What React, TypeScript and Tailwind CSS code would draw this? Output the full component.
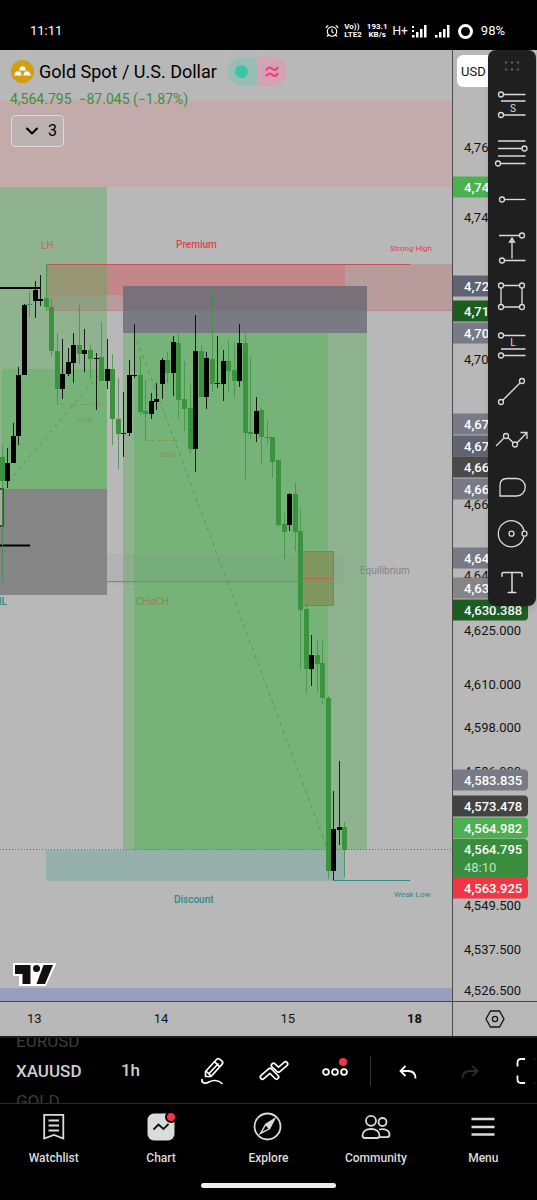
import { ReactNode } from "react"
import { AlarmClock, ChevronDown, Type } from "lucide-react"

type Candle = [high: number, top: number, bottom: number, low: number, up?: boolean]

const CANDLE_STEP = 5.53

// up = black body, down = green body
const candles: Candle[] = [
    [445, 457, 481, 582],
    [448, 463, 481, 488, true],
    [423, 436, 463, 463, true],
    [367, 375, 436, 445, true],
    [304, 305, 375, 375, true],
    [291, 304, 305, 317],
    [281, 290, 301, 318, true],
    [275, 299, 301, 306, true],
    [264, 298, 307, 310],
    [298, 307, 351, 356],
    [333, 351, 389, 404],
    [339, 374, 389, 399, true],
    [348, 362, 374, 376, true],
    [333, 345, 363, 383, true],
    [305, 345, 354, 364],
    [329, 350, 354, 372, true],
    [345, 350, 359, 379],
    [353, 358, 359, 410, true],
    [322, 357, 381, 381],
    [339, 369, 381, 389, true],
    [354, 369, 419, 445],
    [378, 419, 434, 469],
    [392, 433, 434, 457, true],
    [360, 375, 433, 436, true],
    [324, 375, 376, 378, true],
    [356, 375, 412, 415],
    [380, 411, 414, 440],
    [393, 401, 414, 419, true],
    [383, 399, 402, 410, true],
    [358, 360, 384, 399, true],
    [352, 360, 373, 383],
    [336, 342, 373, 396, true],
    [334, 343, 400, 419],
    [361, 399, 409, 431],
    [383, 408, 449, 453],
    [315, 351, 449, 472, true],
    [345, 351, 397, 397],
    [352, 358, 397, 409, true],
    [292, 359, 384, 392],
    [336, 383, 384, 388, true],
    [350, 361, 384, 401, true],
    [340, 361, 371, 391],
    [342, 370, 381, 398],
    [324, 343, 381, 387, true],
    [333, 343, 433, 479],
    [357, 432, 434, 439],
    [397, 411, 434, 442, true],
    [407, 410, 437, 465],
    [420, 437, 438, 444],
    [437, 437, 462, 478],
    [460, 460, 525, 527],
    [513, 524, 532, 559],
    [493, 494, 525, 531, true],
    [483, 494, 532, 551],
    [509, 531, 610, 669],
    [604, 609, 669, 693],
    [635, 655, 669, 686, true],
    [640, 655, 664, 692],
    [641, 663, 698, 704],
    [696, 698, 871, 879],
    [791, 829, 871, 880, true],
    [761, 827, 830, 845, true],
    [822, 827, 850, 877],
]

// y is measured from the top of the chart
const ticks = [
    { price: "4,760.000", y: 97 },
    { price: "4,740.000", y: 167 },
    { price: "4,700.000", y: 309 },
    { price: "4,660.000", y: 454 },
    { price: "4,640.000", y: 525 },
    { price: "4,625.000", y: 580 },
    { price: "4,610.000", y: 634 },
    { price: "4,598.000", y: 677 },
    { price: "4,586.000", y: 721 },
    { price: "4,549.500", y: 855 },
    { price: "4,537.500", y: 899 },
    { price: "4,526.500", y: 940 },
]

const badges = [
    { price: "4,748.500", y: 137, color: "bg-[#4caf50]" },
    { price: "4,720.800", y: 236, color: "bg-[#5f6372]" },
    { price: "4,710.250", y: 261, color: "bg-[#1b5e20]" },
    { price: "4,707.400", y: 283, color: "bg-[#787b86]" },
    { price: "4,679.100", y: 374, color: "bg-[#787b86]" },
    { price: "4,676.300", y: 396, color: "bg-[#5f6372]" },
    { price: "4,669.900", y: 417, color: "bg-[#4a4a4a]" },
    { price: "4,664.200", y: 439, color: "bg-[#787b86]" },
    { price: "4,645.100", y: 508, color: "bg-[#787b86]" },
    { price: "4,636.500", y: 538, color: "bg-[#858585]" },
    { price: "4,630.388", y: 560, color: "bg-[#1b5e20]" },
    { price: "4,583.835", y: 730, color: "bg-[#787b86]" },
    { price: "4,573.478", y: 756, color: "bg-[#434343]" },
    { price: "4,564.982", y: 778, color: "bg-[#4caf50]" },
    { price: "4,564.795", y: 809, color: "bg-[#388e3c]", countdown: "48:10" },
    { price: "4,563.925", y: 838, color: "bg-[#f23645]" },
]

const drawingTools: { name: string; icon: ReactNode }[] = [
    {
        name: "Short position",
        icon: (
            <>
                <path d="M9.5 7.5H31.5M7 14H31.5M9.5 28H31.5" />
                <circle cx="7" cy="7.5" r="2.5" />
                <circle cx="7" cy="28" r="2.5" />
                <text x="19" y="24.5" textAnchor="middle" fontSize="10" fill="#dbdbdb" stroke="none">S</text>
            </>
        ),
    },
    {
        name: "Fib retracement",
        icon: (
            <>
                <path d="M4 6H31.5M4 13.5H28M4 21H31.5M6.5 28.5H31.5" />
                <circle cx="30.5" cy="13.5" r="2.5" />
                <circle cx="4" cy="28.5" r="2.5" />
            </>
        ),
    },
    {
        name: "Horizontal ray",
        icon: (
            <>
                <path d="M10.5 17.5H31.5" />
                <circle cx="8" cy="17.5" r="2.5" />
            </>
        ),
    },
    {
        name: "Price range",
        icon: (
            <>
                <path d="M5 5.5H25.5M10.5 30.5H31.5M18 28.5V9M15.5 12L18 8L20.5 12Z" />
                <circle cx="28" cy="5.5" r="2.5" />
                <circle cx="8" cy="30.5" r="2.5" />
            </>
        ),
    },
    {
        name: "Rectangle",
        icon: (
            <>
                <path d="M9.5 7.5H25.5M9.5 29H25.5M7 10V26.5M28 10V26.5" />
                <circle cx="7" cy="7.5" r="2.5" />
                <circle cx="28" cy="7.5" r="2.5" />
                <circle cx="7" cy="29" r="2.5" />
                <circle cx="28" cy="29" r="2.5" />
            </>
        ),
    },
    {
        name: "Long position",
        icon: (
            <>
                <path d="M9.5 9.5H31.5M7 23H31.5M9.5 29.5H31.5" />
                <circle cx="7" cy="9.5" r="2.5" />
                <circle cx="7" cy="29.5" r="2.5" />
                <text x="19" y="20" textAnchor="middle" fontSize="10" fill="#dbdbdb" stroke="none">L</text>
            </>
        ),
    },
    {
        name: "Trend line",
        icon: (
            <>
                <path d="M9 27L26 10" />
                <circle cx="7" cy="29" r="2.5" />
                <circle cx="28" cy="8" r="2.5" />
            </>
        ),
    },
    {
        name: "Path",
        icon: (
            <>
                <path d="M2 25L10 17M14 16.5L19 21.5M23 22L33 11.5M26.5 11.5H33V18" />
                <circle cx="12" cy="15" r="2.5" />
                <circle cx="21" cy="23.5" r="2.5" />
            </>
        ),
    },
    {
        name: "Shape",
        icon: <path d="M6 27V16.5Q6 9.5 13 9.5H22.5A8.7 8.7 0 0 1 22.5 27Z" />,
    },
    {
        name: "Circle",
        icon: (
            <>
                <path d="M30 15A13 13 0 1 0 30 20.5" />
                <circle cx="17.5" cy="17.7" r="2.5" />
                <circle cx="30.5" cy="17.7" r="2.5" />
            </>
        ),
    },
    { name: "Text", icon: <Type x={3} y={3} width={30} height={31} strokeWidth={1.2} /> },
]

function Zones() {
    return (
        <g>
            <rect x="0" y="100" width="452" height="87" fill="#c4abab" />
            <rect x="0" y="187" width="107" height="302" fill="#8fb38f" />
            <rect x="2" y="369" width="105" height="120" fill="#76b379" />
            <rect x="0" y="489" width="107" height="106" fill="#858585" />

            {/* supply */}
            <rect x="46" y="264" width="406" height="47" fill="#b89c9c" />
            <rect x="46" y="264" width="299" height="31" fill="#c38689" />
            <rect x="46" y="264" width="61" height="47" fill="#8f9f80" />
            <rect x="46" y="264" width="61" height="31" fill="#969574" />
            <path d="M46 310.5H452" stroke="#b28080" strokeOpacity="0.6" />
            <path d="M46 264.5H410" stroke="#c4505a" strokeWidth="1" />
            <path d="M46.5 264V311" stroke="#6b9a63" />

            {/* short position */}
            <rect x="123" y="333" width="244" height="517" fill="#8fb38f" />
            <rect x="134" y="333" width="194" height="517" fill="#76b379" />
            <rect x="123" y="286" width="244" height="47" fill="#797a83" />
            <rect x="123" y="286" width="244" height="25" fill="#787179" />

            {/* equilibrium */}
            <rect x="107" y="554" width="238" height="31" fill="#787b86" fillOpacity="0.1" />
            <path d="M107 581.5H123" stroke="#cf5c68" />
            <path d="M123 581.5H303" stroke="#a97a58" />
            <rect x="302.5" y="551.5" width="31" height="54" fill="#80975f" stroke="#b4684d" />
            <path d="M303 578.5H334" stroke="#b4684d" />

            {/* demand */}
            <rect x="46" y="850" width="299" height="31" fill="#96b1ac" />
            <path d="M333 880.5H410" stroke="#2f8c83" />
            <rect x="0" y="988" width="452" height="13" fill="#969fbb" />
        </g>
    )
}

function PriceChart() {
    return (
        <svg
            viewBox="0 50 452 951"
            preserveAspectRatio="xMaxYMin slice"
            className="h-full w-full"
            fontFamily="Roboto, sans-serif"
            role="img"
            aria-label="XAUUSD 1h candlestick chart"
        >
            <Zones />

            <g fill="none" stroke="#5c9460" strokeDasharray="4 4">
                <path d="M8 482L98 376" />
                <path d="M137 340L327 848" />
            </g>
            <g fill="none" stroke="#7f9a55" strokeDasharray="8 4">
                <path d="M57 404.5H107" />
                <path d="M146 440.5H182" />
            </g>
            <path d="M0 849.5H452" stroke="#5f7d5f" strokeDasharray="1 2" />
            <path d="M0 288H41M0 545.5H30" stroke="#000" strokeWidth="2" />
            <rect x="-4" y="489" width="7" height="37" fill="#a5aaa5" stroke="#2f5a35" strokeWidth="2" />

            {candles.map(([high, top, bottom, low, up], i) => {
                const x = Math.floor(2 + i * CANDLE_STEP)
                return (
                    <g key={i} fill={up ? "#000" : "#3b923f"}>
                        <rect x={x} y={high} width="1" height={low - high} fillOpacity={up ? 0.85 : 0.75} />
                        <rect x={x - 2} y={top} width="5" height={bottom - top} />
                    </g>
                )
            })}

            <g fontSize="10" fontWeight="500">
                <text x="41" y="249" fill="#b5705a" fontWeight="400">LH</text>
                <text x="176" y="248" fill="#d94350">Premium</text>
                <text x="360" y="574" fill="#82838f" fontWeight="400">Equilibrium</text>
                <text x="174" y="903" fill="#2f8c83">Discount</text>
                <text x="136" y="605" fill="#8f8748" fontWeight="400">CHoCH</text>
                <text x="7" y="605" textAnchor="end" fill="#2f8c83">HL</text>
            </g>
            <g fontSize="8">
                <text x="390" y="251" fill="#d94350">Strong High</text>
                <text x="394" y="897" fill="#2f8c83">Weak Low</text>
                <text x="77" y="422" fill="#7f9a55">BOS</text>
                <text x="160" y="457" fill="#7f9a55">BOS</text>
            </g>

            {/* TradingView mark */}
            <path d="M15 965H53.5L44.5 984H21V974H15Z" fill="#fff" stroke="#fff" strokeWidth="4" />
            <path d="M15 965H30.5V984H22.5V974H15Z" fill="#111" />
            <circle cx="36.5" cy="968.5" r="3.5" fill="#111" />
            <path d="M43.5 965H53L45 984H36.5Z" fill="#111" />
        </svg>
    )
}

function Signal({ dotted }: { dotted?: boolean }) {
    return (
        <svg width="15" height="14" viewBox="0 0 15 14" fill="#fff">
            {dotted && <path d="M0 2h2v2H0zM0 6h2v2H0z" />}
            <path d="M0 11h2.5v2.5H0zM4 8h2.5v5.5H4zM8 5h2.500v8.500H8zM12 1h2.5v12.5H12z" />
        </svg>
    )
}

function StatusBar() {
    return (
        <header className="flex h-[50px] shrink-0 items-center justify-between bg-black pr-8 pl-[30px] pt-3 text-[13px]">
            <span>11:11</span>
            <div className="flex items-center gap-[5px]">
                <AlarmClock size={14} />
                <span className="text-[8px] leading-[8px] font-bold">Vo))<br />LTE2</span>
                <span className="text-center text-[8px] leading-[8px] font-bold">193.1<br />KB/s</span>
                <div className="flex items-center gap-2">
                    <div className="flex items-center gap-1">
                        <span className="text-xs">H+</span>
                        <Signal dotted />
                    </div>
                    <Signal />
                    <span className="size-[15px] rounded-full border-[3px] border-white" />
                    <span>98%</span>
                </div>
            </div>
        </header>
    )
}

function SymbolHeader() {
    return (
        <div className="absolute top-0 left-0 text-black">
            <div className="flex items-center pt-[7px] pl-[11px]">
                <svg width="23" height="23" viewBox="0 0 23 23">
                    <circle cx="11.5" cy="11.5" r="11.5" fill="#d39d12" />
                    <g fill="#fff">
                        <path d="M9.500 6.500h4l1.500 4H8zM5 11.500h4.200l1.600 4H3zM13.800 11.500H18l2 4h-7.800z" />
                    </g>
                </svg>
                <h1 className="ml-[5px] text-lg leading-6 whitespace-nowrap">Gold Spot / U.S. Dollar</h1>
                <div className="ml-[10px] flex h-[29px] overflow-hidden rounded-full">
                    <span className="grid w-[30px] place-items-center bg-[#97bdb5]">
                        <span className="size-[13px] rounded-full bg-[#3dc4a4]" />
                    </span>
                    <span className="grid w-[30px] place-items-center bg-[#d3a3b3]">
                        <svg width="14" height="12" viewBox="0 0 14 12" fill="none" stroke="#f23d80" strokeWidth="2.2">
                            <path d="M1 4.500C3 0.500 6 1.500 7.500 3S11.500 4.500 13 1M1 10.500C3 6.500 6 7.500 7.500 9s4 1.500 5.500-2" />
                        </svg>
                    </span>
                </div>
            </div>
            <p className="mt-[3px] pl-[10px] text-sm leading-5 whitespace-pre text-[#3c8f40]">4,564.795  −87.045 (−1.87%)</p>
            <button className="mt-[6px] ml-[11px] flex h-8 w-[53px] items-center justify-between rounded border border-[#dadada] bg-[#b8b8b8]/60 pr-[6px] pl-[10px] text-base">
                <ChevronDown size={20} strokeWidth={2.5} />
                3
            </button>
        </div>
    )
}

function PriceAxis() {
    return (
        <div className="relative flex-1 overflow-hidden text-[13px] leading-[21px]">
            <button className="absolute top-[5px] left-1 h-8 w-14 rounded-md bg-white pl-1 text-left">USD</button>
            {ticks.map((tick) => (
                <span key={tick.price} className="absolute left-[11px] -translate-y-1/2" style={{ top: tick.y }}>
                    {tick.price}
                </span>
            ))}
            {badges.map((badge) => (
                <span
                    key={badge.price}
                    className={`absolute left-0 w-[75px] -translate-y-1/2 rounded-r-sm pl-[11px] font-medium text-white ${badge.color}`}
                    style={{ top: badge.y }}
                >
                    {badge.price}
                    {badge.countdown && <span className="block h-[19px] leading-[15px] font-normal text-[#c5e0c6]">{badge.countdown}</span>}
                </span>
            ))}
        </div>
    )
}

function DrawingPanel() {
    return (
        <div className="absolute top-0 right-px flex h-[556px] w-12 flex-col rounded-lg bg-[#1f1f1f] shadow-md">
            <div className="grid h-[31px] shrink-0 place-items-center">
                <svg width="16" height="10" viewBox="0 0 16 10" fill="#5a5a5a">
                    <circle cx="2" cy="1.5" r="1.2" />
                    <circle cx="8" cy="1.5" r="1.2" />
                    <circle cx="14" cy="1.5" r="1.2" />
                    <circle cx="2" cy="8.5" r="1.2" />
                    <circle cx="8" cy="8.5" r="1.2" />
                    <circle cx="14" cy="8.5" r="1.2" />
                </svg>
            </div>
            {drawingTools.map((tool) => (
                <button key={tool.name} aria-label={tool.name} className="grid min-h-0 flex-1 place-items-center">
                    <svg width="36" height="36" viewBox="0 0 36 36" fill="none" stroke="#dbdbdb" strokeWidth="1.3" className="text-[#dbdbdb]">
                        {tool.icon}
                    </svg>
                </button>
            ))}
        </div>
    )
}

function ChartToolbar() {
    return (
        <div className="flex h-[68px] shrink-0 items-center overflow-hidden border-t-2 border-b border-t-[#1c1c1c] border-b-[#2a2a2a] bg-black">
            <div className="w-[105px] pl-4 text-[17px] leading-[30px] font-medium text-[#cfcfcf]">
                <div className="font-normal text-[#3d3d3d]">EURUSD</div>
                <div>XAUUSD</div>
                <div className="font-normal text-[#3d3d3d]">GOLD</div>
            </div>
            <button className="w-[51px] text-[17px] font-medium text-[#cfcfcf]">1h</button>
            <div className="ml-[42px] flex gap-[31px]">
                <button aria-label="Draw">
                    <svg width="30" height="30" viewBox="0 0 30 30" fill="none" stroke="#fff" strokeWidth="1.7" strokeLinejoin="round" strokeLinecap="round">
                        <path d="M7.500 15.500L18.500 3.500Q20 2 21.700 3.200L24 5.200Q25.500 6.700 24 8.300L13 20.500H7.500ZM16.500 5.700L21.700 10.800M8.500 15.500L13 19.800M11.500 17L20 8" />
                        <path d="M4 23.500C3.500 27.500 7.500 28 11 26S20 23.500 24 27.500" />
                    </svg>
                </button>
                <button aria-label="Indicators">
                    <svg width="30" height="30" viewBox="0 0 30 30" fill="none" strokeLinejoin="round" strokeLinecap="round">
                        <g stroke="#fff" strokeWidth="6">
                            <path d="M3.500 21L11 14.500L17.500 21" />
                            <path d="M14.500 9.500L19.500 14L26.500 8" />
                        </g>
                        <g stroke="#000" strokeWidth="2.6">
                            <path d="M3.500 21L11 14.500L17.500 21" />
                            <path d="M14.500 9.500L19.500 14L26.500 8" />
                        </g>
                    </svg>
                </button>
                <button aria-label="More" className="relative">
                    <svg width="30" height="30" viewBox="0 0 30 30" fill="none" stroke="#fff" strokeWidth="1.8">
                        <circle cx="6" cy="16" r="2.9" />
                        <circle cx="15" cy="16" r="2.9" />
                        <circle cx="24" cy="16" r="2.9" />
                    </svg>
                    <span className="absolute top-[2px] right-[3px] size-2 rounded-full bg-[#f23645]" />
                </button>
            </div>
            <div className="ml-5 h-[30px] w-px bg-[#333]" />
            <button aria-label="Undo" className="ml-7">
                <svg width="18" height="30" viewBox="0 0 18 30" fill="none" stroke="#fff" strokeWidth="1.8">
                    <path d="M6.500 10L1.500 15L6.500 20M1.500 15H9Q16.500 15 16.500 22.500" />
                </svg>
            </button>
            <button aria-label="Redo" className="ml-11" disabled>
                <svg width="18" height="30" viewBox="0 0 18 30" fill="none" stroke="#2c2c2c" strokeWidth="1.8">
                    <path d="M11.500 10L16.500 15L11.500 20M16.500 15H9Q1.500 15 1.500 22.500" />
                </svg>
            </button>
            <button aria-label="Fullscreen" className="ml-auto">
                <svg width="21" height="30" viewBox="0 0 21 30" fill="none" strokeWidth="1.8">
                    <path d="M9 3H5Q1.500 3 1.500 6.500V10.500M9 27H5Q1.500 27 1.500 23.500V19.500" stroke="#fff" />
                    <path d="M17 3H20M17 27H20" stroke="#222" strokeWidth="1" />
                </svg>
            </button>
        </div>
    )
}

const navItems: { label: string; icon: ReactNode; badge?: boolean }[] = [
    {
        label: "Watchlist",
        icon: <path d="M5.200 2.800H24.300V26.500L15 23L5.200 26.500ZM9.500 8.500H20M9.500 13.500H20M9.500 18.500H20" />,
    },
    {
        label: "Chart",
        badge: true,
        icon: (
            <>
                <rect x="1.5" y="1.5" width="27" height="27" rx="6.5" fill="#dbdbdb" stroke="none" />
                <path d="M7.500 17.500L12.500 12.500L17.500 17L22.500 12" stroke="#111" />
            </>
        ),
    },
    {
        label: "Explore",
        icon: (
            <>
                <circle cx="14.5" cy="14.5" r="13" />
                <path d="M21.500 7L12.800 12.200L7.500 21.500L16.500 16.800ZM12.800 12.200L16.500 16.800" strokeWidth="1.5" />
                <path d="M21.500 7L12.800 12.200L16.500 16.800Z" fill="#dbdbdb" stroke="none" />
            </>
        ),
    },
    {
        label: "Community",
        icon: (
            <>
                <circle cx="10" cy="8.8" r="5" />
                <circle cx="21.5" cy="10" r="4" />
                <path d="M1.500 23.500C1.500 19.500 5 17 10 17S18.500 19.500 18.500 23.500Q18.500 26 16 26H4Q1.500 26 1.500 23.500Z" />
                <path d="M18 17.500C24 16 28.500 18.500 28.500 22.500Q28.500 25.200 26 25.200H18.500" />
            </>
        ),
    },
    {
        label: "Menu",
        icon: <path d="M3.500 7H26.500M3.500 15H26.500M3.500 22.500H26.500" strokeWidth="2.5" />,
    },
]

function BottomNav() {
    return (
        <nav className="flex h-24 shrink-0 flex-col items-center bg-black">
            <div className="grid w-full grid-cols-5 pt-2">
                {navItems.map((item) => (
                    <a key={item.label} href="#" className="flex flex-col items-center gap-2">
                        <span className="relative">
                            <svg width="30" height="30" viewBox="0 0 30 30" fill="none" stroke="#dbdbdb" strokeWidth="1.8">
                                {item.icon}
                            </svg>
                            {item.badge && (
                                <span className="absolute -top-[1px] -right-[1px] size-3 rounded-full border-2 border-black bg-[#f23645]" />
                            )}
                        </span>
                        <span className="text-xs leading-4 font-medium text-[#dbdbdb]">{item.label}</span>
                    </a>
                ))}
            </div>
            <div className="mt-auto mb-3 h-[5px] w-[135px] rounded-full bg-[#ededed]" />
        </nav>
    )
}

export default function App() {
    return (
        <div className="flex h-screen min-h-[1100px] flex-col bg-black font-[Roboto,sans-serif] text-white">
            <StatusBar />
            <main className="relative flex min-h-0 flex-1 bg-[#b8b8b8] text-[#141414]">
                <section className="flex min-w-0 flex-1 flex-col">
                    <div className="relative min-h-0 flex-1">
                        <PriceChart />
                        <SymbolHeader />
                    </div>
                    <div className="flex h-[35px] items-center justify-between border-t border-[#4a4a4a] pr-[30px] pl-[27px] text-[13px]">
                        <span>13</span>
                        <span>14</span>
                        <span>15</span>
                        <span className="font-bold">18</span>
                    </div>
                </section>
                <aside className="flex w-[85px] flex-col border-l border-[#4a4a4a]">
                    <PriceAxis />
                    <button aria-label="Chart settings" className="grid h-[35px] place-items-center border-t border-[#4a4a4a]">
                        <svg width="20" height="18" viewBox="0 0 20 18" fill="none" stroke="#141414" strokeWidth="1.3">
                            <path d="M5.500 1H14.500L19 9L14.500 17H5.500L1 9Z" />
                            <circle cx="10" cy="9" r="2.6" />
                        </svg>
                    </button>
                </aside>
                <DrawingPanel />
            </main>
            <ChartToolbar />
            <BottomNav />
        </div>
    )
}
